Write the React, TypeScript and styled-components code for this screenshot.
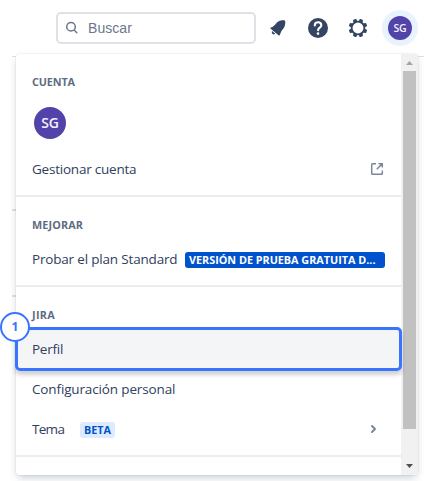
import React from "react";
import styled, { createGlobalStyle } from "styled-components";

const GlobalStyle = createGlobalStyle`
  * { box-sizing: border-box; }
  body { margin: 0; background: #fff; font-family: "Open Sans", "Noto Sans", sans-serif; color: #2f4060; overflow: hidden; }
`;

const Page = styled.div`
  position: relative;
  width: 424px;
  height: 481px;
  background: #fff;
  overflow: hidden;
`;

const Header = styled.header`
  height: 57px;
  margin-left: 12px;
  padding: 10px 6px 0 44px;
  display: flex;
  align-items: flex-start;
  border-bottom: 1px solid #dcdfe6;
`;

const SearchBox = styled.div`
  display: flex;
  align-items: center;
  width: 200px;
  height: 32px;
  margin-top: 2px;
  padding: 0 0 0 7px;
  gap: 9px;
  border: 2px solid #dfe1e6;
  border-radius: 5px;
  color: #6b778c;
  font: 14px "Liberation Sans", Arial, sans-serif;
  letter-spacing: 0.05px;
`;

const Actions = styled.nav`
  display: flex;
  align-items: center;
  height: 36px;
  margin-left: 10px;
  gap: 16px;
  svg { display: block; flex: none; }
`;

const AvatarRing = styled.div`
  width: 36px;
  height: 36px;
  margin-left: -4px;
  display: grid;
  place-items: center;
  border-radius: 50%;
  background: #e9f2ff;
`;

const Avatar = styled.div<{ $size: number }>`
  width: ${(p) => p.$size}px;
  height: ${(p) => p.$size}px;
  display: grid;
  place-items: center;
  border-radius: 50%;
  background: #5243aa;
  color: #f4f2fb;
  font-weight: 600;
  font-size: ${(p) => (p.$size > 24 ? 14 : 10.5)}px;
  letter-spacing: -0.1px;
  line-height: 1;
`;

const Menu = styled.div`
  position: absolute;
  left: 16px;
  top: 54px;
  width: 402px;
  height: 421px;
  display: flex;
  border-radius: 4px;
  background: #fff;
  overflow: hidden;
`;

const MenuShadow = styled.div`
  position: absolute;
  left: 16px;
  top: 54px;
  width: 402px;
  height: 421px;
  border-radius: 4px;
  box-shadow: 0 4px 8px -2px rgba(9, 30, 66, 0.25), 0 0 1px rgba(9, 30, 66, 0.31);
`;

const MenuBody = styled.div`
  flex: 1;
  min-width: 0;
`;

const Section = styled.section`
  padding: 20px 0 6px;
  border-bottom: 2px solid #ebecf0;
`;

const Heading = styled.h2<{ $track?: number }>`
  margin: 0 16px 6px;
  height: 16px;
  line-height: 16px;
  font-size: 10.8px;
  font-weight: 700;
  color: #5e6c84;
  letter-spacing: ${(p) => p.$track ?? -0.1}px;
`;

const AvatarRow = styled.div`
  padding: 11px 18px 10px;
`;

const Row = styled.div<{ $active?: boolean }>`
  height: 40px;
  padding: 0 16px;
  display: flex;
  align-items: center;
  background: ${(p) => (p.$active ? "#f4f5f7" : "transparent")};
`;

const Label = styled.span<{ $track?: number }>`
  font-size: 13.5px;
  line-height: 20px;
  white-space: nowrap;
  letter-spacing: ${(p) => p.$track ?? -0.2}px;
`;

const Spacer = styled.span`
  flex: 1;
`;

const Lozenge = styled.span<{ $bold?: boolean }>`
  width: ${(p) => (p.$bold ? 200 : 35)}px;
  height: 16px;
  margin-top: 1px;
  padding: 0 4px;
  line-height: 16px;
  border-radius: 3px;
  font-size: 10.8px;
  font-weight: 700;
  white-space: nowrap;
  color: ${(p) => (p.$bold ? "#fff" : "#0052cc")};
  background: ${(p) => (p.$bold ? "#0052cc" : "#deebff")};
`;

const LozengeSlot = styled.span<{ $left: number }>`
  display: flex;
  margin-left: auto;
  width: ${(p) => 369 - p.$left}px;
`;

const Scrollbar = styled.div`
  width: 17px;
  display: flex;
  flex-direction: column;
  align-items: center;
  background: #f1f1f1;
  svg { display: block; }
`;

const Thumb = styled.div`
  width: 13px;
  height: 358px;
  background: #c1c1c1;
`;

const Edges = styled.div`
  width: 4px;
  margin-left: 12px;
  height: 240px;
  padding-top: 152px;
  display: flex;
  flex-direction: column;
  justify-content: space-between;
`;

const Edge = styled.i`
  display: block;
  height: 2px;
  background: #dfe1e6;
`;

const Highlight = styled.div`
  position: absolute;
  left: 15px;
  top: 327px;
  width: 387px;
  height: 44px;
  border: 3px solid #3874ff;
  border-radius: 5px;
  box-shadow: 0 4px 4px rgba(0, 0, 0, 0.18);
`;

const Step = styled.div`
  position: absolute;
  left: 0;
  top: 312px;
  width: 30px;
  height: 30px;
  display: grid;
  place-items: center;
  border: 2px solid #3874ff;
  border-radius: 50%;
  background: #fff;
  color: #3874ff;
  font-size: 12px;
  font-weight: 700;
  line-height: 1;
`;

const teeth = [22.5, 67.5, 112.5, 157.5, 202.5, 247.5, 292.5, 337.5];

export default function App() {
  return (
    <Page>
      <GlobalStyle />
      <Header>
        <SearchBox>
          <svg width="14" height="14" viewBox="0 0 14 14" fill="none" stroke="#6b778c" strokeWidth="1.5" strokeLinecap="round">
            <circle cx="6" cy="5.7" r="4.3" />
            <path d="M9.2 9 11.8 11.7" />
          </svg>
          <span>Buscar</span>
        </SearchBox>
        <Actions>
          <svg width="24" height="24" viewBox="0 0 24 24" fill="#344563">
            <path d="M4.800 11.600C7.200 10.800 8.900 9.300 10.700 6.700c1.800-1.800 4.400-2.400 7.100-2.400.9 0 1.300.4 1.400 1.200.3 2.800-.4 5.700-2.200 7.400-1.600 1.700-2.400 3.600-3 5.900-.2.800-.9 1-1.500.5L4.700 12.700c-.5-.4-.5-.900.1-1.100Z" />
            <path d="M6.100 15 9.200 17.700c-.9.900-2 .9-2.800.1-.7-.7-.8-1.800-.3-2.800Z" />
          </svg>
          <svg width="24" height="24" viewBox="0 0 24 24">
            <circle cx="12" cy="12" r="10" fill="#344563" />
            <path d="M8.800 9.400c0-2 1.400-3.100 3.200-3.100s3.300 1.200 3.300 2.900c0 2.600-3.200 2.200-3.200 5" fill="none" stroke="#fff" strokeWidth="2.100" strokeLinecap="round" />
            <circle cx="12" cy="17.600" r="1.300" fill="#fff" />
          </svg>
          <svg width="24" height="24" viewBox="0 0 24 24">
            <g fill="#344563">
              {teeth.map((a) => (
                <rect key={a} x="10.1" y="2.7" width="3.800" height="4" rx="1" transform={`rotate(${a} 12 12)`} />
              ))}
            </g>
            <circle cx="12" cy="12" r="6.400" fill="#fff" stroke="#344563" strokeWidth="1.900" />
          </svg>
          <AvatarRing>
            <Avatar $size={24}>SG</Avatar>
          </AvatarRing>
        </Actions>
      </Header>
      <Edges>
        <Edge />
        <Edge />
      </Edges>

      <MenuShadow />
      <Menu>
        <MenuBody>
          <Section>
            <Heading>CUENTA</Heading>
            <AvatarRow>
              <Avatar $size={32}>SG</Avatar>
            </AvatarRow>
            <Row>
              <Label $track={-0.22}>Gestionar cuenta</Label>
              <Spacer />
              <svg width="16" height="16" viewBox="0 0 16 16" fill="none" stroke="#7a869a" strokeWidth="1.5">
                <path d="M7 2.800H3.500a.8.8 0 0 0-.8.8v8.900c0 .4.4.8.8.8h9c.4 0 .8-.4.8-.8V9.500M9.500 2.800h3.800v3.800M13 3 7.800 8.200" />
              </svg>
            </Row>
          </Section>
          <Section>
            <Heading $track={0.15}>MEJORAR</Heading>
            <Row>
              <Label $track={-0.18}>Probar el plan Standard</Label>
              <LozengeSlot $left={169}>
                <Lozenge $bold>VERSIÓN DE PRUEBA GRATUITA D...</Lozenge>
              </LozengeSlot>
            </Row>
          </Section>
          <Section>
            <Heading $track={0.35}>JIRA</Heading>
            <Row $active>
              <Label $track={-0.25}>Perfil</Label>
            </Row>
            <Row>
              <Label $track={-0.14}>Configuración personal</Label>
            </Row>
            <Row>
              <Label $track={-0.7}>Tema</Label>
              <LozengeSlot $left={64}>
                <Lozenge>BETA</Lozenge>
                <Spacer />
                <svg width="24" height="16" viewBox="0 0 24 16" fill="none" stroke="#7a869a" strokeWidth="2" strokeLinecap="round" strokeLinejoin="round">
                  <path d="m11 5 3 3-3 3" />
                </svg>
              </LozengeSlot>
            </Row>
          </Section>
        </MenuBody>
        <Scrollbar>
          <svg width="17" height="17" viewBox="0 0 17 17" fill="#a3a3a3">
            <path d="M5 11 8.500 7 12 11Z" />
          </svg>
          <Thumb />
          <svg width="17" height="46" viewBox="0 0 17 46" fill="#505050">
            <path d="M5 35h7l-3.500 4Z" />
          </svg>
        </Scrollbar>
      </Menu>

      <Highlight />
      <Step>1</Step>
    </Page>
  );
}
